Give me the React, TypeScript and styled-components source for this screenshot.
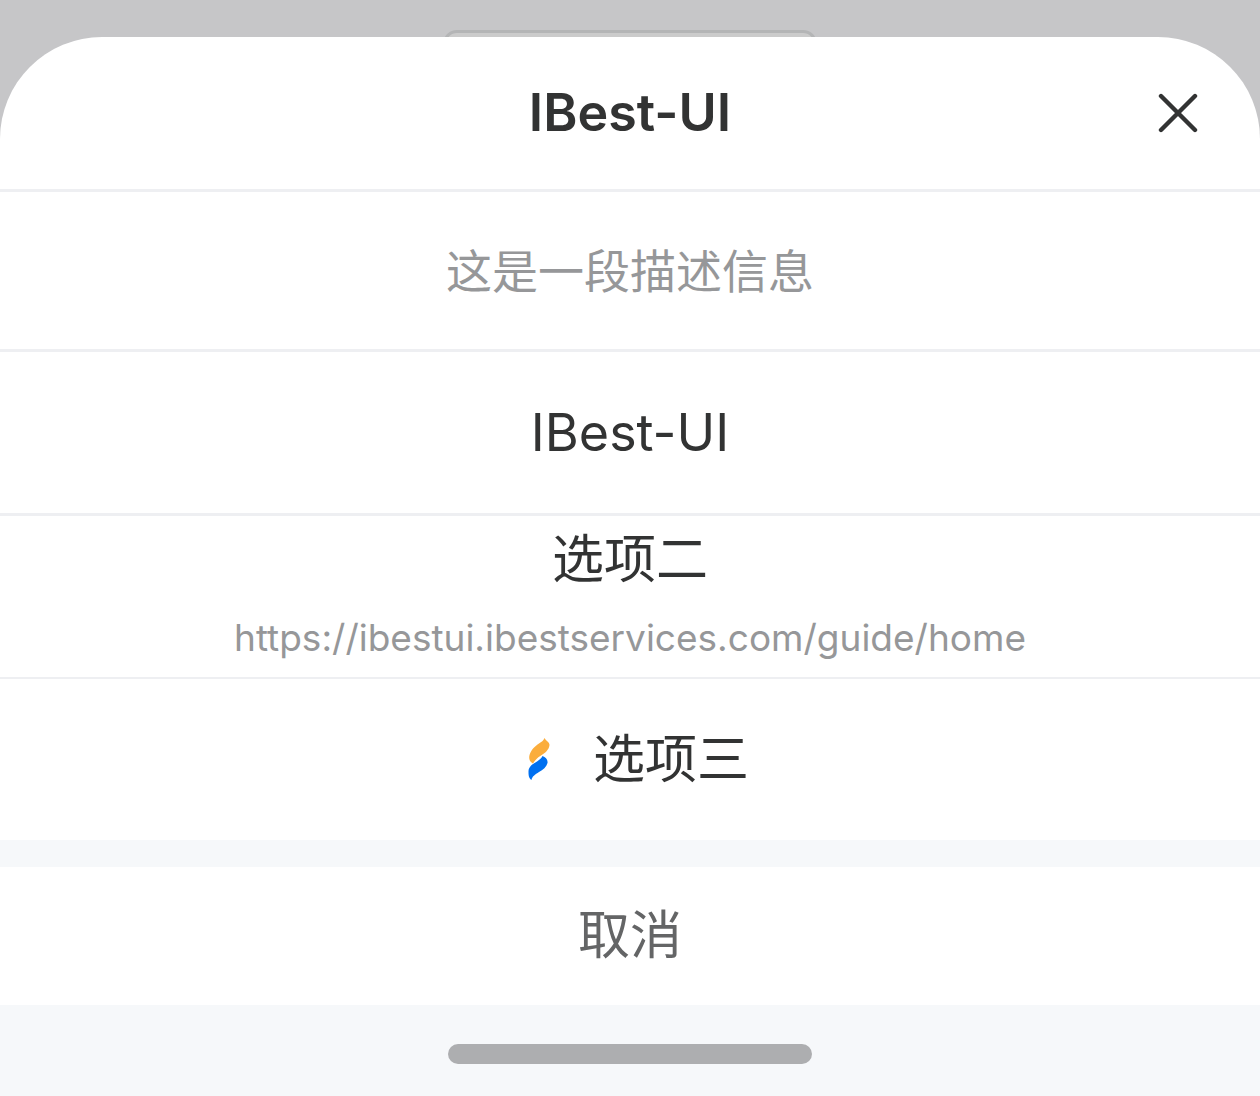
import React from "react";
import styled, { createGlobalStyle, css } from "styled-components";

const color = {
  mask: "#c6c6c8",
  maskBorder: "#b4b5b6",
  surface: "#ffffff",
  page: "#f6f8fa",
  line: "#eeeff2",
  text: "#323333",
  sub: "#969799",
  cancel: "#646566",
  bar: "#adaeb0",
};

const GlobalStyle = createGlobalStyle`
  * { box-sizing: border-box; }
  body {
    margin: 0;
    background: ${color.mask};
    font-family: Inter, "Noto Sans CJK SC", sans-serif;
  }
`;

const Screen = styled.main`
  display: flex;
  flex-direction: column;
  min-height: 100vh;
  background: ${color.mask};
`;

const Backdrop = styled.div`
  display: flex;
  justify-content: center;
  height: 37px;
  padding-top: 30px;
  overflow: hidden;
`;

const CoveredButton = styled.button`
  flex: none;
  width: 374px;
  max-width: 100%;
  height: 96px;
  border: 3px solid ${color.maskBorder};
  border-radius: 14px;
  background: #cbcbcb;
`;

const Sheet = styled.section`
  display: flex;
  flex: 1;
  flex-direction: column;
  overflow: hidden;
  border-radius: 102px 102px 0 0;
  background: ${color.surface};
`;

const rule = css`
  border: 0 solid ${color.line};
  border-bottom-width: 3px;
`;

const Header = styled.header`
  ${rule}
  display: grid;
  grid-template-columns: 40px 1fr 40px;
  align-items: center;
  height: 155px;
  padding: 0 62px;
`;

const Title = styled.h1`
  grid-column: 2;
  margin: 0;
  color: ${color.text};
  font-size: 52px;
  font-weight: 600;
  line-height: 64px;
  text-align: center;
`;

const CloseButton = styled.button`
  display: flex;
  width: 40px;
  height: 40px;
  padding: 0;
  border: 0;
  background: none;
  color: ${color.text};
  cursor: pointer;
`;

const Description = styled.p`
  ${rule}
  display: flex;
  align-items: center;
  justify-content: center;
  height: 160px;
  margin: 0;
  color: ${color.sub};
  font-size: 46px;
  line-height: 64px;
`;

const Actions = styled.ul`
  margin: 0;
  padding: 0;
  list-style: none;
`;

const Action = styled.li`
  ${rule}
  &:nth-last-child(2) {
    border-bottom-width: 2px;
  }
  &:last-child {
    border-bottom-width: 0;
  }
`;

const ActionButton = styled.button<{ $tone?: string; $height?: number; $stacked?: boolean }>`
  display: flex;
  flex-direction: column;
  align-items: center;
  justify-content: center;
  gap: 14px;
  width: 100%;
  height: ${(p) => p.$height ?? 161}px;
  padding: ${(p) => (p.$stacked ? "4px 0 0" : "0")};
  border: 0;
  background: ${color.surface};
  color: ${(p) => p.$tone ?? color.text};
  font: inherit;
  font-size: 52px;
  line-height: 64px;
  cursor: pointer;
`;

const Label = styled.span`
  display: flex;
  align-items: center;
  gap: 30px;
`;

const SubLabel = styled.span`
  color: ${color.sub};
  font-size: 37px;
  line-height: 64px;
`;

const Gap = styled.div`
  height: 27px;
  background: ${color.page};
`;

const Footer = styled.footer`
  display: flex;
  flex: 1;
  align-items: flex-start;
  justify-content: center;
  padding-top: 39px;
  background: ${color.page};
`;

const HomeBar = styled.div`
  width: 364px;
  height: 20px;
  border-radius: 10px;
  background: ${color.bar};
`;

const CloseIcon = () => (
  <svg width="40" height="40" viewBox="0 0 40 40" fill="none" aria-hidden="true">
    <path d="M3 3L37 37M37 3L3 37" stroke="currentColor" strokeWidth="4.4" strokeLinecap="round" />
  </svg>
);

const BrandIcon = () => (
  <svg width="52" height="52" viewBox="0 0 52 52" aria-hidden="true">
    <path d="M33.5 4C35 7 38.500 8 38.500 11C38 16 34 19 30 21.500C26 24 24 26 22 29.500C19 28 17.500 25 18.500 21C20 16 24 12 28 9.500C30.500 8 32.500 6.500 33.500 4Z" fill="#fbad3c" />
    <path d="M31.500 22C34.500 23 37 25.500 36.500 29C35.500 33 32 36 28 38C24 40.500 21 42.500 20.500 46C17.500 44 17.500 41 17.500 37C18 32 22 30 26 27.500C29 25.500 30.500 24 31.500 22Z" fill="#0070f0" />
  </svg>
);

interface Option {
  name: string;
  detail?: string;
  icon?: React.ReactNode;
}

const options: Option[] = [
  { name: "IBest-UI" },
  { name: "选项二", detail: "https://ibestui.ibestservices.com/guide/home" },
  { name: "选项三", icon: <BrandIcon /> },
];

export default function App() {
  return (
    <>
      <GlobalStyle />
      <Screen>
        <Backdrop aria-hidden="true">
          <CoveredButton tabIndex={-1} />
        </Backdrop>
        <Sheet role="dialog" aria-labelledby="sheet-title">
          <Header>
            <Title id="sheet-title">IBest-UI</Title>
            <CloseButton aria-label="关闭">
              <CloseIcon />
            </CloseButton>
          </Header>
          <Description>这是一段描述信息</Description>
          <Actions>
            {options.map((option) => (
              <Action key={option.name}>
                <ActionButton $stacked={Boolean(option.detail)}>
                  <Label>
                    {option.icon}
                    {option.name}
                  </Label>
                  {option.detail && <SubLabel>{option.detail}</SubLabel>}
                </ActionButton>
              </Action>
            ))}
          </Actions>
          <Gap />
          <ActionButton $tone={color.cancel} $height={138}>
            取消
          </ActionButton>
          <Footer>
            <HomeBar />
          </Footer>
        </Sheet>
      </Screen>
    </>
  );
}
